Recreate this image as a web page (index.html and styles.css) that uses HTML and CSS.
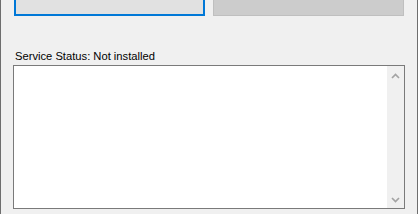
FILE: index.html
```html
<!DOCTYPE html>
<html lang="en">
<head>
    <meta charset="UTF-8">
    <title>Service Installer</title>
    <link rel="stylesheet" href="styles.css">
</head>
<body>
    <div class="window">
        <div class="buttons">
            <button class="btn btn-focused"></button>
            <button class="btn" disabled></button>
        </div>

        <div class="status-label">Service Status: Not installed</div>

        <div class="log-box">
            <div class="log-text"></div>
            <div class="scrollbar">
                <div class="scroll-arrow arrow-up">
                    <svg width="9" height="6" viewBox="0 0 9 6"><path d="M1 5 L4.5 1.5 L8 5" fill="none" stroke="#a3a3a3" stroke-width="1.7"/></svg>
                </div>
                <div class="scroll-track"></div>
                <div class="scroll-arrow arrow-down">
                    <svg width="9" height="6" viewBox="0 0 9 6"><path d="M1 1 L4.5 4.5 L8 1" fill="none" stroke="#a3a3a3" stroke-width="1.7"/></svg>
                </div>
            </div>
        </div>
    </div>
</body>
</html>
```

FILE: styles.css
```css
body {
    margin: 0;
    font-family: "Liberation Sans", Arial, sans-serif;
    background-color: #f0f0f0;
    overflow: hidden;
}
.window {
    height: 214px;
    box-sizing: border-box;
    border-left: 1px solid #6e6e6e;
    border-right: 1px solid #6e6e6e;
    background-color: #f0f0f0;
}
.buttons {
    display: flex;
    gap: 8px;
    padding-left: 13px;
}
.btn {
    width: 191px;
    height: 36px;
    margin-top: -20px;
    box-sizing: border-box;
    background-color: #cccccc;
    border: 1px solid #bfbfbf;
    padding: 0;
}
.btn-focused {
    background-color: #e1e1e1;
    border: 2px solid #0078d7;
}
.status-label {
    margin: 33px 0 0 14px;
    height: 14px;
    line-height: 14px;
    font-size: 11.2px;
    color: #000;
}
.log-box {
    display: flex;
    margin: 2px 0 0 12px;
    width: 392px;
    height: 144px;
    box-sizing: border-box;
    border: 1px solid #7a7a7a;
    background-color: white;
}
.log-text {
    flex: 1;
}
.scrollbar {
    width: 17px;
    display: flex;
    flex-direction: column;
    background-color: #f0f0f0;
}
.scroll-arrow {
    height: 17px;
    box-sizing: border-box;
    display: flex;
    align-items: flex-start;
    justify-content: center;
}
.arrow-up {
    padding-top: 7px;
}
.arrow-down {
    padding-top: 6px;
}
.scroll-track {
    flex: 1;
}
svg {
    display: block;
}
```
